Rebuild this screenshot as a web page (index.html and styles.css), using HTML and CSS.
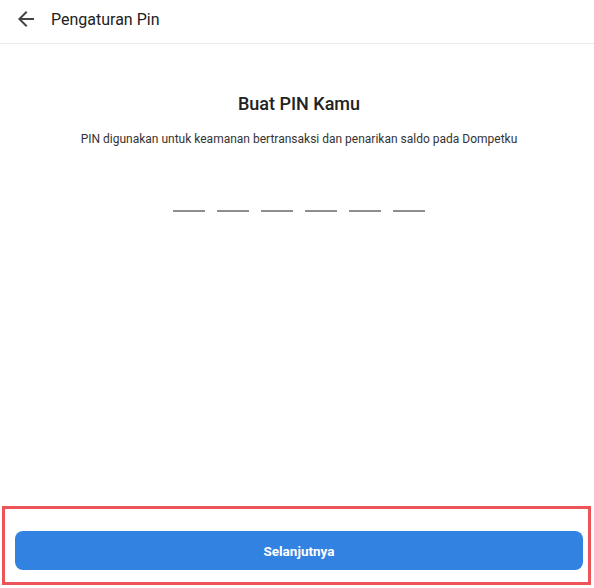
FILE: index.html
```html
<!DOCTYPE html>
<html lang="id">
<head>
<meta charset="utf-8">
<title>Pengaturan Pin</title>
<link rel="stylesheet" href="styles.css">
</head>
<body>
<div class="page">
  <header class="topbar">
    <button class="back" aria-label="Kembali">
      <svg width="24" height="24" viewBox="0 0 24 24"><path d="M20 11H7.83l5.59-5.59L12 4l-8 8 8 8 1.41-1.41L7.83 13H20v-2z" fill="#444"/></svg>
    </button>
    <span class="topbar-title">Pengaturan Pin</span>
  </header>
  <main class="content">
    <h1 class="title">Buat PIN Kamu</h1>
    <p class="subtitle">PIN digunakan untuk keamanan bertransaksi dan penarikan saldo pada Dompetku</p>
    <div class="pin">
      <span class="pin-slot"></span>
      <span class="pin-slot"></span>
      <span class="pin-slot"></span>
      <span class="pin-slot"></span>
      <span class="pin-slot"></span>
      <span class="pin-slot"></span>
    </div>
  </main>
  <footer class="footer">
    <button class="next">Selanjutnya</button>
  </footer>
</div>
</body>
</html>
```
FILE: styles.css
```css
* { box-sizing: border-box; }
html, body { margin: 0; padding: 0; height: 100%; background: #fff; }
body { font-family: Roboto, "Noto Sans", Arial, sans-serif; color: #222; }
.page { display: flex; flex-direction: column; height: 588px; }
.topbar {
  height: 44px;
  flex: none;
  display: flex;
  align-items: center;
  padding: 0 14px 5px;
  border-bottom: 1px solid #e9e9e9;
}
.back {
  border: 0; background: none; padding: 0; margin: 0;
  width: 24px; height: 24px; display: flex;
  cursor: pointer;
}
.topbar-title { margin-left: 13px; font-size: 16px; color: #222; }
.content {
  flex: 1;
  display: flex;
  flex-direction: column;
  align-items: center;
  padding: 49px 0 0 4px;
}
.title { margin: 0; font-size: 18px; font-weight: 500; line-height: 21px; color: #222; }
.subtitle { margin: 18px 0 0; font-size: 12px; line-height: 14px; color: #333; }
.pin { display: flex; gap: 12px; margin-top: 64px; }
.pin-slot { width: 32px; height: 2px; background: #8e8e8e; }
.footer {
  flex: none;
  margin: 0 3px 3px 2px;
  border: 3px solid #ec5457;
  padding: 22px 5px 12px 10px;
}
.next {
  display: block;
  width: 100%;
  height: 39px;
  border: 0;
  border-radius: 8px;
  background: #3182e1;
  color: #fff;
  font-family: Roboto, "Noto Sans", Arial, sans-serif;
  font-size: 13.5px;
  font-weight: 700;
}
```
